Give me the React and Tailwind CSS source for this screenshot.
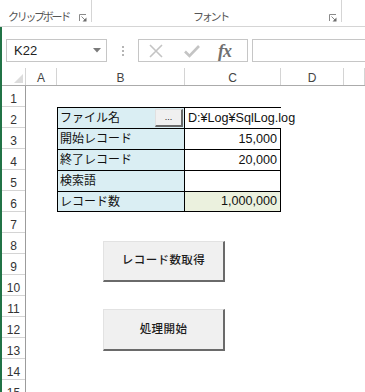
import React from "react";

const FONT = { fontFamily: '"Liberation Sans", "Noto Sans CJK JP", sans-serif' };

const Launcher = () => (
  <svg width="8" height="8" viewBox="0 0 8 8" className="shrink-0">
    <path d="M0.5 7 V0.5 H7" fill="none" stroke="#8a8a8a" strokeWidth="1" />
    <path d="M2.5 2.5 L6.5 6.5" stroke="#8a8a8a" strokeWidth="1" />
    <polygon points="7.5,3.5 7.5,7.5 3.5,7.5" fill="#6e6e6e" />
  </svg>
);

const cols = [
  { label: "A", w: "w-[31px]" },
  { label: "B", w: "w-[128px]" },
  { label: "C", w: "w-[96px]" },
  { label: "D", w: "w-[63px]" },
  { label: "", w: "flex-1" },
];

const tableRows = [
  { label: "ファイル名", value: "D:¥Log¥SqlLog.log", path: true },
  { label: "開始レコード", value: "15,000" },
  { label: "終了レコード", value: "20,000" },
  { label: "検索語", value: "" },
  { label: "レコード数", value: "1,000,000", green: true },
];

const SheetButton = ({ children, className }) => (
  <div
    className={`ml-[77px] w-[122px] flex items-center justify-center bg-[#f0f0f0] border-t border-l border-[#e2e2e2] border-r-2 border-b-2 border-r-[#6a6a6a] border-b-[#6a6a6a] text-[11.5px] font-medium tracking-[0.4px] text-[#1c1c1c] ${className}`}
  >
    {children}
  </div>
);

export default function App() {
  return (
    <div className="w-[365px] h-[392px] overflow-hidden bg-white flex flex-col" style={FONT}>
      {/* Ribbon group labels */}
      <div className="h-[27px] shrink-0 flex border-b border-[#d5d5d5]">
        <div className="w-[92px] flex">
          <div className="flex-1 flex items-end pb-[3px] pl-[8px] pr-[4px]">
            <span className="text-[11px] tracking-[-2.3px] text-[#555] leading-none">クリップボード</span>
            <span className="ml-auto mb-[1px]"><Launcher /></span>
          </div>
          <div className="w-px h-[22px] bg-[#d5d5d5]" />
        </div>
        <div className="w-[250px] flex">
          <div className="flex-1 flex items-end pb-[3px] pr-[4px]">
            <span className="flex-1 text-center text-[11px] tracking-[-2.3px] text-[#555] leading-none">フォント</span>
            <span className="mb-[1px]"><Launcher /></span>
          </div>
          <div className="w-px h-[22px] bg-[#d5d5d5]" />
        </div>
        <div className="flex-1" />
      </div>

      <div className="flex-1 flex flex-col border-l-2 border-[#217346]">
        {/* Formula bar */}
        <div className="h-[41px] shrink-0 flex pt-[12px] pb-[6px]">
          <div className="ml-[4px] w-[101px] h-[23px] border border-[#c6c6c6] flex items-center pl-[7px] pr-[5px]">
            <span className="text-[13px] text-[#222]">K22</span>
            <svg width="8" height="5" viewBox="0 0 8 5" className="ml-auto">
              <polygon points="0,0 8,0 4,4.5" fill="#7a7a7a" />
            </svg>
          </div>
          <div className="w-[31px] flex flex-col items-center justify-center gap-[2px]">
            <div className="w-[2px] h-[2px] bg-[#b5b5b5]" />
            <div className="w-[2px] h-[2px] bg-[#b5b5b5]" />
            <div className="w-[2px] h-[2px] bg-[#b5b5b5]" />
          </div>
          <div className="w-[110px] h-[23px] border border-[#c6c6c6] flex items-center pl-[9px]">
            <svg width="16" height="16" viewBox="0 0 16 16">
              <path d="M2 2 L14 14 M14 2 L2 14" stroke="#c4c4c4" strokeWidth="1.6" />
            </svg>
            <svg width="18" height="16" viewBox="0 0 18 16" className="ml-[19px]">
              <path d="M2 8.5 L6.5 13 L16 3" fill="none" stroke="#c4c4c4" strokeWidth="2.6" />
            </svg>
            <span
              className="ml-[17px] text-[18px] italic font-bold text-[#707070] leading-none tracking-[-1px]"
              style={{ fontFamily: '"Liberation Serif", serif' }}
            >
              fx
            </span>
          </div>
          <div className="ml-[4px] flex-1 h-[23px] border border-r-0 border-[#c6c6c6]" />
        </div>

        {/* Column headers */}
        <div className="h-[18px] shrink-0 flex border-b border-[#ababab] text-[12px] text-[#444]">
          <div className="w-[24px] border-r border-[#d4d4d4] flex items-end justify-end pr-[2px] pb-[2px]">
            <svg width="9" height="9" viewBox="0 0 9 9">
              <polygon points="9,0 9,9 0,9" fill="#dcdcdc" />
            </svg>
          </div>
          {cols.map((c, i) => (
            <div
              key={i}
              className={`${c.w} border-r border-[#d4d4d4] flex items-end justify-center pb-[1px] leading-none`}
            >
              {c.label}
            </div>
          ))}
        </div>

        {/* Sheet body */}
        <div className="flex-1 flex">
          <div className="w-[24px] shrink-0 border-r border-[#9c9c9c] flex flex-col">
            {Array.from({ length: 15 }, (_, i) => (
              <div
                key={i}
                className="h-[21px] shrink-0 border-b border-[#d4d4d4] flex items-end justify-center pb-[1px] text-[12px] leading-none text-[#333]"
              >
                {i + 1}
              </div>
            ))}
          </div>

          <div className="flex-1 flex flex-col">
            <div className="h-[21px] shrink-0" />
            {tableRows.map((r, i) => (
              <div key={i} className="h-[21px] shrink-0 flex ml-[31px] text-[#111]">
                <div
                  className={`w-[128px] border-l border-t border-r border-black bg-[#daeef3] flex items-center pl-[2px] pr-[1px] ${
                    i === tableRows.length - 1 ? "border-b" : ""
                  }`}
                >
                  <span className="text-[12px]">{r.label}</span>
                  {r.path && (
                    <div className="ml-auto w-[28px] h-[18px] bg-[#f0f0f0] border-t border-l border-[#e0e0e0] border-r-2 border-b-2 border-r-[#6a6a6a] border-b-[#6a6a6a] flex items-center justify-center text-[9px] leading-none text-[#222]">
                      ...
                    </div>
                  )}
                </div>
                <div
                  className={`w-[96px] border-t border-black flex items-center text-[12.6px] ${
                    r.path ? "pl-[3px] whitespace-nowrap overflow-visible" : "border-r justify-end pr-[3px]"
                  } ${r.green ? "bg-[#ebf1de]" : ""} ${i === tableRows.length - 1 ? "border-b" : ""}`}
                >
                  {r.value}
                </div>
              </div>
            ))}
            <SheetButton className="mt-[29px] h-[41px]">レコード数取得</SheetButton>
            <SheetButton className="mt-[27px] h-[42px]">処理開始</SheetButton>
          </div>
        </div>
      </div>
    </div>
  );
}
